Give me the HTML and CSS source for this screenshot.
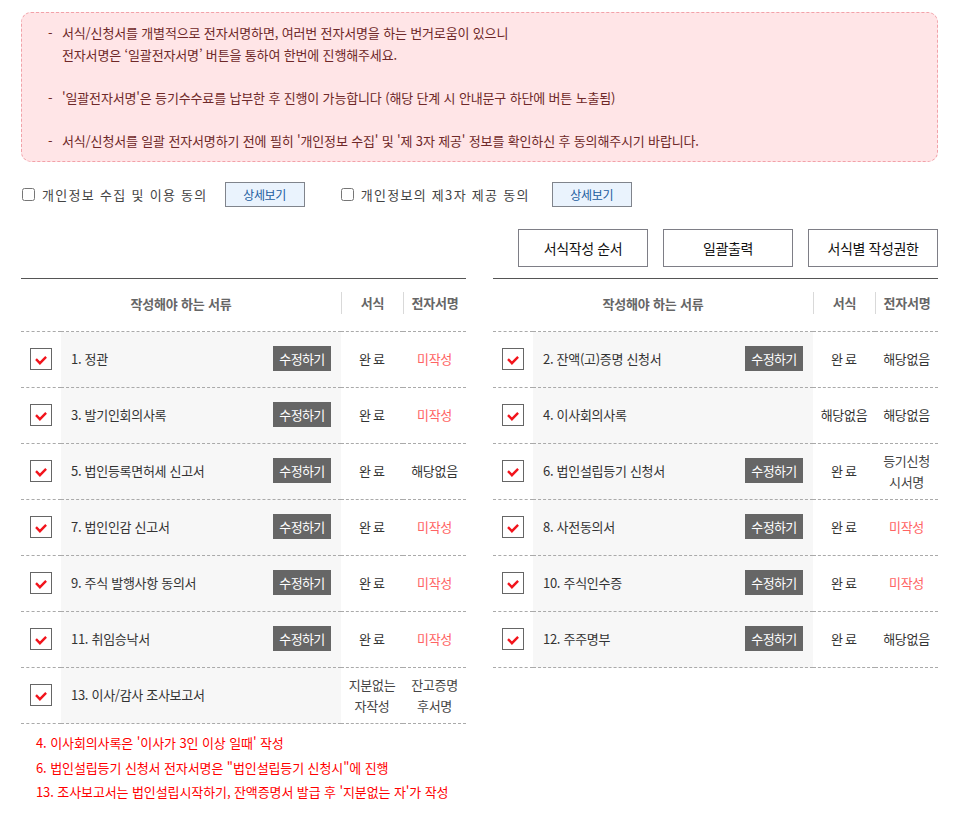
FILE: index.html
```html
<!DOCTYPE html>
<html lang="ko">
<head>
  <meta charset="UTF-8">
  <title>전자서명 서류 목록</title>
  <link rel="stylesheet" href="styles.css">
</head>
<body>
  <div class="wrap">
    <!-- 안내 문구 -->
    <div class="notice">
      <ul>
        <li><span class="line">서식/신청서를 개별적으로 전자서명하면, 여러번 전자서명을 하는 번거로움이 있으니</span><span class="line">전자서명은 ‘일괄전자서명’ 버튼을 통하여 한번에 진행해주세요.</span></li>
        <li><span class="line">'일괄전자서명'은 등기수수료를 납부한 후 진행이 가능합니다 (해당 단계 시 안내문구 하단에 버튼 노출됨)</span></li>
        <li><span class="line">서식/신청서를 일괄 전자서명하기 전에 필히 '개인정보 수집' 및 '제 3자 제공' 정보를 확인하신 후 동의해주시기 바랍니다.</span></li>
      </ul>
    </div>

    <!-- 동의 체크 -->
    <div class="agree">
      <div class="agree-item">
        <label><input type="checkbox">개인정보 수집 및 이용 동의</label>
        <button class="btn-detail">상세보기</button>
      </div>
      <div class="agree-item">
        <label><input type="checkbox">개인정보의 제3자 제공 동의</label>
        <button class="btn-detail">상세보기</button>
      </div>
    </div>

    <div class="actions">
      <button class="btn-line">서식작성 순서</button>
      <button class="btn-line">일괄출력</button>
      <button class="btn-line">서식별 작성권한</button>
    </div>

    <div class="tables">
      <table class="doc-table">
        <colgroup><col class="c-chk"><col class="c-name"><col class="c-form"><col class="c-sign"></colgroup>
        <thead>
          <tr>
            <th colspan="2">작성해야 하는 서류</th>
            <th><div class="sep">서식</div></th>
            <th><div class="sep">전자서명</div></th>
          </tr>
        </thead>
        <tbody>
          <tr>
            <td><span class="chk"><svg viewBox="0 0 22 22"><path d="M5.5 11.2 L9.8 15.6 L16.6 8.6"/></svg></span></td>
            <td class="col-name"><div class="name"><span>1. 정관</span><button class="btn-edit">수정하기</button></div></td>
            <td class="done">완료</td>
            <td class="red">미작성</td>
          </tr>
          <tr>
            <td><span class="chk"><svg viewBox="0 0 22 22"><path d="M5.5 11.2 L9.8 15.6 L16.6 8.6"/></svg></span></td>
            <td class="col-name"><div class="name"><span>3. 발기인회의사록</span><button class="btn-edit">수정하기</button></div></td>
            <td class="done">완료</td>
            <td class="red">미작성</td>
          </tr>
          <tr>
            <td><span class="chk"><svg viewBox="0 0 22 22"><path d="M5.5 11.2 L9.8 15.6 L16.6 8.6"/></svg></span></td>
            <td class="col-name"><div class="name"><span>5. 법인등록면허세 신고서</span><button class="btn-edit">수정하기</button></div></td>
            <td class="done">완료</td>
            <td>해당없음</td>
          </tr>
          <tr>
            <td><span class="chk"><svg viewBox="0 0 22 22"><path d="M5.5 11.2 L9.8 15.6 L16.6 8.6"/></svg></span></td>
            <td class="col-name"><div class="name"><span>7. 법인인감 신고서</span><button class="btn-edit">수정하기</button></div></td>
            <td class="done">완료</td>
            <td class="red">미작성</td>
          </tr>
          <tr>
            <td><span class="chk"><svg viewBox="0 0 22 22"><path d="M5.5 11.2 L9.8 15.6 L16.6 8.6"/></svg></span></td>
            <td class="col-name"><div class="name"><span>9. 주식 발행사항 동의서</span><button class="btn-edit">수정하기</button></div></td>
            <td class="done">완료</td>
            <td class="red">미작성</td>
          </tr>
          <tr>
            <td><span class="chk"><svg viewBox="0 0 22 22"><path d="M5.5 11.2 L9.8 15.6 L16.6 8.6"/></svg></span></td>
            <td class="col-name"><div class="name"><span>11. 취임승낙서</span><button class="btn-edit">수정하기</button></div></td>
            <td class="done">완료</td>
            <td class="red">미작성</td>
          </tr>
          <tr>
            <td><span class="chk"><svg viewBox="0 0 22 22"><path d="M5.5 11.2 L9.8 15.6 L16.6 8.6"/></svg></span></td>
            <td class="col-name"><div class="name"><span>13. 이사/감사 조사보고서</span></div></td>
            <td class="two">지분없는<br>자작성</td>
            <td class="two">잔고증명<br>후서명</td>
          </tr>
        </tbody>
      </table>

      <table class="doc-table">
        <colgroup><col class="c-chk"><col class="c-name"><col class="c-form"><col class="c-sign"></colgroup>
        <thead>
          <tr>
            <th colspan="2">작성해야 하는 서류</th>
            <th><div class="sep">서식</div></th>
            <th><div class="sep">전자서명</div></th>
          </tr>
        </thead>
        <tbody>
          <tr>
            <td><span class="chk"><svg viewBox="0 0 22 22"><path d="M5.5 11.2 L9.8 15.6 L16.6 8.6"/></svg></span></td>
            <td class="col-name"><div class="name"><span>2. 잔액(고)증명 신청서</span><button class="btn-edit">수정하기</button></div></td>
            <td class="done">완료</td>
            <td>해당없음</td>
          </tr>
          <tr>
            <td><span class="chk"><svg viewBox="0 0 22 22"><path d="M5.5 11.2 L9.8 15.6 L16.6 8.6"/></svg></span></td>
            <td class="col-name"><div class="name"><span>4. 이사회의사록</span></div></td>
            <td>해당없음</td>
            <td>해당없음</td>
          </tr>
          <tr>
            <td><span class="chk"><svg viewBox="0 0 22 22"><path d="M5.5 11.2 L9.8 15.6 L16.6 8.6"/></svg></span></td>
            <td class="col-name"><div class="name"><span>6. 법인설립등기 신청서</span><button class="btn-edit">수정하기</button></div></td>
            <td class="done">완료</td>
            <td class="two">등기신청<br>시서명</td>
          </tr>
          <tr>
            <td><span class="chk"><svg viewBox="0 0 22 22"><path d="M5.5 11.2 L9.8 15.6 L16.6 8.6"/></svg></span></td>
            <td class="col-name"><div class="name"><span>8. 사전동의서</span><button class="btn-edit">수정하기</button></div></td>
            <td class="done">완료</td>
            <td class="red">미작성</td>
          </tr>
          <tr>
            <td><span class="chk"><svg viewBox="0 0 22 22"><path d="M5.5 11.2 L9.8 15.6 L16.6 8.6"/></svg></span></td>
            <td class="col-name"><div class="name"><span>10. 주식인수증</span><button class="btn-edit">수정하기</button></div></td>
            <td class="done">완료</td>
            <td class="red">미작성</td>
          </tr>
          <tr>
            <td><span class="chk"><svg viewBox="0 0 22 22"><path d="M5.5 11.2 L9.8 15.6 L16.6 8.6"/></svg></span></td>
            <td class="col-name"><div class="name"><span>12. 주주명부</span><button class="btn-edit">수정하기</button></div></td>
            <td class="done">완료</td>
            <td>해당없음</td>
          </tr>
        </tbody>
      </table>
    </div>

    <ul class="notes">
      <li>4. 이사회의사록은 '이사가 3인 이상 일때' 작성</li>
      <li>6. 법인설립등기 신청서 전자서명은 "법인설립등기 신청시"에 진행</li>
      <li>13. 조사보고서는 법인설립시작하기, 잔액증명서 발급 후 '지분없는 자'가 작성</li>
    </ul>
  </div>
</body>
</html>
```

FILE: styles.css
```css
/* 기본 설정 */
* {
  margin: 0;
  padding: 0;
  box-sizing: border-box;
}
body {
  font-family: "Noto Sans CJK KR", "Noto Sans", sans-serif;
  font-size: 13px;
  color: #333;
  background: #fff;
}
button {
  font-family: inherit;
  cursor: pointer;
}
.wrap {
  width: 917px;
  margin-left: 21px;
  padding-top: 12px;
}

/* 안내 문구 박스 */
.notice {
  height: 150px;
  background: #ffe5e7;
  border: 1px dashed #f2a2a9;
  border-radius: 10px;
  padding: 9px 0 0 26px;
  color: #6e2828;
  letter-spacing: -0.15px;
}
.notice li {
  list-style: none;
  position: relative;
  padding-left: 14px;
  margin-bottom: 21.5px;
}
.notice .line {
  display: block;
  height: 21.5px;
  line-height: 21.5px;
  white-space: nowrap;
}
.notice li::before {
  content: "-";
  position: absolute;
  left: 0;
  top: 0;
  line-height: 21.5px;
}

/* 동의 체크 */
.agree {
  display: flex;
  gap: 35px;
  margin-top: 20px;
  height: 25px;
  align-items: center;
}
.agree-item {
  display: flex;
  align-items: center;
}
.agree-item label {
  display: flex;
  align-items: center;
  color: #444;
  letter-spacing: 1.3px;
  margin-right: 17px;
}
.agree-item:last-child label {
  margin-right: 22px;
}
.agree-item input {
  width: 13px;
  height: 13px;
  margin: 0 7px 0 1px;
}
.btn-detail {
  width: 80px;
  height: 25px;
  background: #eaf3fd;
  border: 1px solid #80848c;
  color: #1b5c9e;
  font-size: 12px;
  letter-spacing: -0.3px;
}

/* 상단 버튼 */
.actions {
  display: flex;
  justify-content: flex-end;
  gap: 15px;
  margin-top: 22px;
}
.btn-line {
  width: 130px;
  height: 38px;
  background: #fff;
  border: 1px solid #7e7e86;
  color: #111;
  font-size: 14px;
  letter-spacing: -0.4px;
}

/* 서류 표 */
.tables {
  display: flex;
  justify-content: space-between;
  align-items: flex-start;
  margin-top: 11px;
}
.doc-table {
  width: 445px;
  border-collapse: collapse;
  table-layout: fixed;
  border-top: 1px solid #555;
  letter-spacing: -0.3px;
}
.c-chk { width: 40px; }
.c-name { width: 280px; }
.c-form { width: 62px; }
.c-sign { width: 63px; }
.doc-table th {
  height: 53px;
  padding-bottom: 4px;
  font-weight: 700;
  color: #666;
  text-align: center;
  letter-spacing: -0.2px;
}
.sep {
  border-left: 1px solid #d9d9d9;
  line-height: 22px;
}
.doc-table td {
  height: 56px;
  padding-bottom: 2px;
  border-top: 1px dashed #aaa;
  border-bottom: 1px dashed #aaa;
  text-align: center;
  color: #333;
}
.doc-table td.col-name {
  background: #f7f7f7;
  text-align: left;
}
.doc-table td.done {
  letter-spacing: 2px;
  text-indent: 2px;
}
.doc-table td.red {
  color: #ff6363;
}
.doc-table td.two {
  line-height: 21px;
  color: #444;
}
.chk {
  display: inline-block;
  width: 22px;
  height: 22px;
  border: 1px solid #666;
  background: #fff;
  vertical-align: middle;
}
.chk svg {
  display: block;
  width: 20px;
  height: 20px;
}
.chk path {
  fill: none;
  stroke: #f2141c;
  stroke-width: 2.6;
}
.name {
  display: flex;
  align-items: center;
  justify-content: space-between;
  padding: 0 10px;
}
.btn-edit {
  width: 58px;
  height: 25px;
  background: #666;
  color: #fff;
  border: none;
  font-size: 13px;
  letter-spacing: -0.6px;
}

/* 하단 주석 */
.notes {
  list-style: none;
  margin-top: 7px;
  padding-left: 15px;
  color: #f00;
  line-height: 24.5px;
  letter-spacing: -0.1px;
}
```
